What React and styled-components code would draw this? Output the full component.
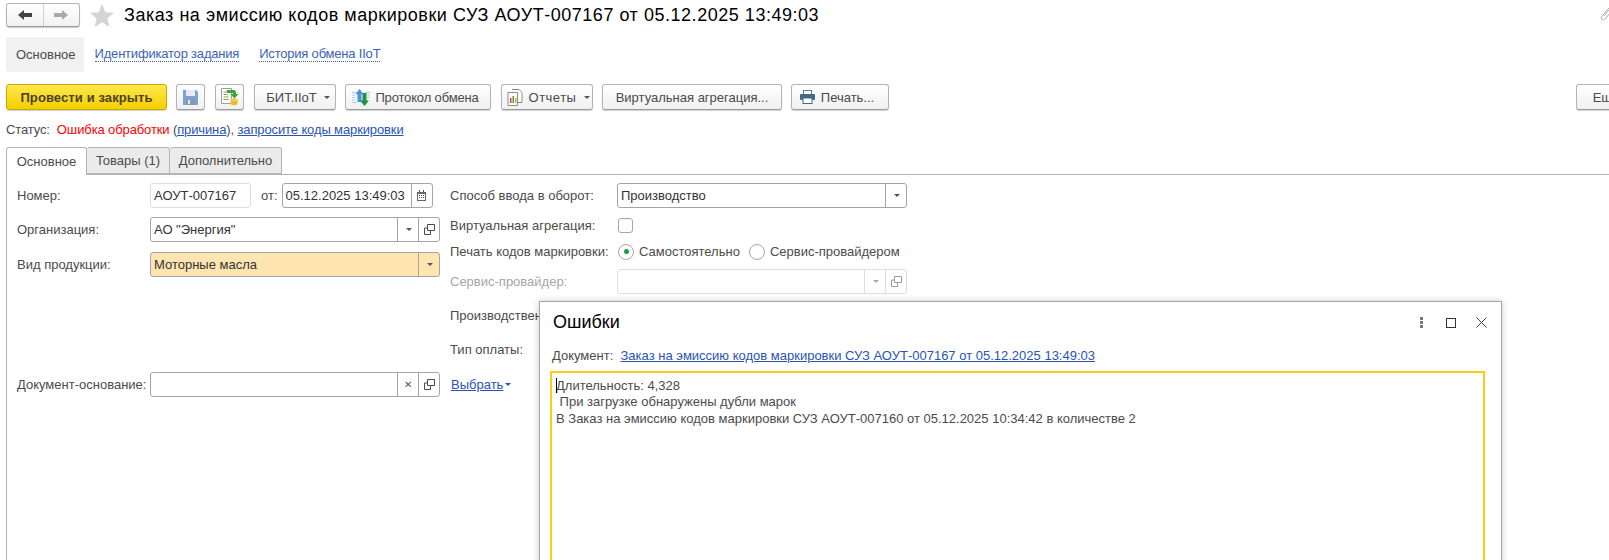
import React from "react";
import styled, { createGlobalStyle } from "styled-components";

const GlobalStyle = createGlobalStyle`
  html, body {
    margin: 0;
    padding: 0;
    background: #fff;
    overflow: hidden;
  }
  body {
    font-family: "Liberation Sans", Arial, sans-serif;
    font-size: 13px;
    color: #4b4b4b;
  }
`;

const Page = styled.div`
  position: relative;
  width: 1609px;
  height: 560px;
  overflow: hidden;
`;

const TitleBar = styled.div`
  display: flex;
  align-items: center;
  height: 30px;
  padding-left: 6px;
`;

const NavGroup = styled.div`
  display: flex;
  width: 74px;
  height: 24px;
  margin-top: -1px;
  box-sizing: border-box;
  border: 1px solid #b4b4b4;
  border-bottom-color: #9b9b9b;
  border-radius: 3px;
  background: linear-gradient(#fff, #f1f1f1);
  box-shadow: 0 1px 1px #ccc;
`;

const NavCell = styled.div`
  flex: 1;
  display: flex;
  align-items: center;
  justify-content: center;
  & + & {
    border-left: 1px solid #d0d0d0;
  }
`;

const StarBox = styled.div`
  display: flex;
  margin-left: 10px;
  margin-right: 10px;
`;

const Title = styled.div`
  flex: 1;
  font-size: 18px;
  letter-spacing: 0.53px;
  color: #000;
  white-space: nowrap;
`;

const SectionBar = styled.div`
  display: flex;
  align-items: center;
  height: 35px;
  margin: 7px 0 0 6px;
`;

const SectionActive = styled.div`
  display: flex;
  align-items: center;
  height: 100%;
  padding: 0 8px 0 10px;
  border-radius: 3px;
  background: #f1f1f1;
  color: #4b4b4b;
`;

const SectionLink = styled.a`
  margin-left: ${(p) => p.$gap}px;
  color: #3d64b4;
  border-bottom: 1px dotted #3d64b4;
  line-height: 14px;
  letter-spacing: -0.2px;
`;

const Toolbar = styled.div`
  display: flex;
  width: 1640px;
  height: 26px;
  gap: 9px;
  margin: 12px 0 0 6px;
`;

const Button = styled.div`
  display: flex;
  flex: none;
  align-items: center;
  justify-content: center;
  gap: ${(p) => p.$gap || 5}px;
  box-sizing: border-box;
  width: ${(p) => p.$width}px;
  height: 26px;
  margin-left: ${(p) => p.$left || 0}px;
  padding: 0 ${(p) => p.$padRight || 0}px 0 ${(p) => p.$padLeft || 0}px;
  border: 1px solid #b4b4b4;
  border-bottom-color: #9b9b9b;
  border-radius: 3px;
  background: linear-gradient(#fff, #f0f0f0);
  box-shadow: 0 1px 1px #d0d0d0;
  color: #4b4b4b;
  letter-spacing: ${(p) => p.$track || 0}px;
  white-space: nowrap;
`;

const PrimaryButton = styled(Button)`
  border-color: #c7a700;
  background: linear-gradient(#ffe84d, #f4cf00);
  color: #4a4222;
  font-weight: bold;
  letter-spacing: 0.1px;
`;

const Caret = styled.span`
  width: 0;
  height: 0;
  margin-left: 2px;
  border-left: 3px solid transparent;
  border-right: 3px solid transparent;
  border-top: 3px solid ${(p) => p.$color || "#555"};
`;

const StatusRow = styled.div`
  display: flex;
  align-items: center;
  height: 20px;
  margin: 9px 0 0 6px;
  letter-spacing: -0.12px;
  white-space: pre;
`;

const ErrorText = styled.span`
  color: #ff0000;
`;

const BlueLink = styled.a`
  color: #2a54b0;
  text-decoration: underline;
`;

const TabStrip = styled.div`
  display: flex;
  height: 28px;
  margin: 8px 0 0 6px;
  box-sizing: border-box;
  border-bottom: 1px solid #b4b4b4;
`;

const Tab = styled.div`
  display: flex;
  align-items: center;
  justify-content: center;
  box-sizing: border-box;
  width: ${(p) => p.$width}px;
  height: ${(p) => (p.$active ? 28 : 27)}px;
  border: 1px solid #b4b4b4;
  border-bottom: ${(p) => (p.$active ? "0" : "1px solid #b4b4b4")};
  border-left-width: ${(p) => (p.$first ? 1 : 0)}px;
  border-radius: 3px 3px 0 0;
  background: ${(p) => (p.$active ? "#fff" : "#ebebeb")};
`;

const FormBody = styled.div`
  display: flex;
  height: 400px;
  margin-left: 6px;
  padding: 8px 0 0 10px;
  border-left: 1px solid #b4b4b4;
`;

const LeftColumn = styled.div`
  display: flex;
  flex: none;
  flex-direction: column;
  width: 433px;
`;

const RightColumn = styled.div`
  display: flex;
  flex-direction: column;
`;

const Row = styled.div`
  display: flex;
  align-items: center;
  height: ${(p) => p.$height}px;
  margin-top: ${(p) => p.$top || 0}px;
`;

const Label = styled.div`
  flex: none;
  width: ${(p) => p.$width}px;
  color: ${(p) => (p.$muted ? "#a6a6a6" : "#4b4b4b")};
  white-space: nowrap;
`;

const Field = styled.div`
  display: flex;
  flex: none;
  align-items: stretch;
  box-sizing: border-box;
  width: ${(p) => p.$width}px;
  height: 25px;
  border: 1px solid ${(p) => (p.$soft ? "#dedede" : "#a5a5a5")};
  border-radius: 3px;
  background: ${(p) => p.$bg || "#fff"};
  color: #333;
`;

const FieldValue = styled.div`
  flex: 1;
  display: flex;
  align-items: center;
  padding-left: 3px;
  white-space: nowrap;
`;

const FieldButton = styled.div`
  flex: none;
  display: flex;
  align-items: center;
  justify-content: center;
  width: 20px;
  border-left: 1px solid ${(p) => (p.$soft ? "#dedede" : "#a5a5a5")};
  color: #555;
  font-size: 10px;
`;

const Checkbox = styled.div`
  box-sizing: border-box;
  width: 15px;
  height: 15px;
  border: 1px solid #a5a5a5;
  border-radius: 3px;
`;

const Radio = styled.div`
  display: flex;
  flex: none;
  align-items: center;
  justify-content: center;
  box-sizing: border-box;
  width: 16px;
  height: 16px;
  margin-right: 5px;
  border: 1px solid #a5a5a5;
  border-radius: 50%;
  &::after {
    content: "";
    display: ${(p) => (p.$on ? "block" : "none")};
    width: 5px;
    height: 5px;
    border-radius: 50%;
    background: #1a9c4a;
  }
`;

const RadioLabel = styled.span`
  margin-right: ${(p) => p.$gap || 0}px;
  white-space: nowrap;
`;

const SmallText = styled.span`
  margin: 0 4px 0 10px;
`;

const PickLink = styled(BlueLink)`
  margin-left: 11px;
`;

const ClipBox = styled.div`
  position: absolute;
  top: 6px;
  left: 1599px;
`;

const Modal = styled.div`
  position: absolute;
  left: 539px;
  top: 301px;
  width: 963px;
  height: 300px;
  box-sizing: border-box;
  padding: 0 16px 0 10px;
  border: 1px solid #a5a5a5;
  background: #fff;
  box-shadow: 0 0 7px rgba(0, 0, 0, 0.22);
`;

const ModalHead = styled.div`
  display: flex;
  align-items: center;
  height: 41px;
  padding-left: 3px;
`;

const ModalTitle = styled.div`
  flex: 1;
  font-size: 18px;
  color: #000;
`;

const WindowIcons = styled.div`
  display: flex;
  align-items: center;
  gap: 20px;
  margin-right: -2px;
`;

const DotsWrap = styled.div`
  display: flex;
  margin-right: 3px;
`;

const DocRow = styled.div`
  display: flex;
  align-items: center;
  height: 18px;
  margin-top: 3px;
  padding-left: 2px;
  white-space: pre;
`;

const ErrorBox = styled.div`
  position: relative;
  box-sizing: border-box;
  height: 260px;
  margin-top: 7px;
  padding: 5px 4px;
  border: 2px solid #fdcb17;
  color: #4b4b4b;
  line-height: 16.4px;
  white-space: pre;
`;

const TextCursor = styled.span`
  position: absolute;
  left: 4px;
  top: 5px;
  width: 1px;
  height: 15px;
  background: #000;
`;

const ArrowIcon = ({ dir, color }) => (
  <svg width="14" height="10" viewBox="0 0 14 10">
    <path
      d={dir === "left" ? "M0 5 6 0v3h8v4H6v3z" : "M14 5 8 0v3H0v4h8v3z"}
      fill={color}
    />
  </svg>
);

const StarIcon = () => (
  <svg width="24" height="23" viewBox="0 0 24 23">
    <path d="M12 0l3.4 8.2 8.6.6-6.6 5.6 2.1 8.6L12 18.3 4.500 23l2.100-8.600L0 8.800l8.600-.6z" fill="#d4d4d4" />
  </svg>
);

const SaveIcon = () => (
  <svg width="15" height="16" viewBox="0 0 15 16">
    <path d="M0 1h13l2 2v13H0z" fill="#7ba4d2" />
    <rect x="3" y="1" width="9" height="6" fill="#e4edf6" />
    <rect x="3" y="10" width="9" height="6" fill="#8c9aa8" />
    <rect x="5" y="11" width="2" height="4" fill="#dfe6ec" />
  </svg>
);

const PostIcon = () => (
  <svg width="18" height="18" viewBox="0 0 18 18">
    <path d="M.5.500h10v15H.5z" fill="#fff" stroke="#98a78a" />
    <path d="M2.500 4h5M2.500 6.500h4M2.500 9h5M2.500 11.500h5" stroke="#7ea24c" />
    <path d="M6 2h6.500c1.500 0 2.500 1 2.500 2.500V6h2.500L13.500 10.500 9.500 6H12V5H6z" fill="#3aa63a" />
    <path d="M9.500 11.500c0-1.500 7-1.500 7 0v4.500c0 1.500-7 1.500-7 0z" fill="#eeb92a" />
    <path d="M9.500 11.500c0 1.200 7 1.200 7 0" fill="none" stroke="#fbe28a" />
  </svg>
);

const ExchangeIcon = () => (
  <svg width="18" height="17" viewBox="0 0 18 17">
    <path d="M0 3.500h4M0 6h3M0 8.500h3M0 11h3M0 13.500h5M13 3.500h5M15 6h3M15 8.500h3" stroke="#a9cbee" />
    <path d="M7.500 0l4 5H9.500v8h-4V5h-2z" fill="#4a90dc" />
    <path d="M12.500 17l-4.500-5.500h2.500V4h4v7.500H17z" fill="#1d9440" />
  </svg>
);

const ReportIcon = () => (
  <svg width="16" height="17" viewBox="0 0 16 17">
    <path d="M5 .500h7l3 3v10h-4" fill="#fff" stroke="#8c8c8c" />
    <path d="M1 3.500h9.500v13H1z" fill="#fff" stroke="#8c8c8c" />
    <rect x="3" y="9" width="1.500" height="5" fill="#d9453d" />
    <rect x="5.500" y="7" width="1.500" height="7" fill="#3da34d" />
    <rect x="8" y="9" width="1.500" height="5" fill="#e2a62b" />
  </svg>
);

const PrintIcon = () => (
  <svg width="15" height="14" viewBox="0 0 15 14">
    <rect x="3.500" y="0.500" width="8" height="4" fill="#fff" stroke="#5d7f9f" />
    <rect x="0" y="4" width="15" height="6" rx="1" fill="#44688c" />
    <rect x="3" y="8" width="9" height="5.500" fill="#fff" stroke="#44688c" />
  </svg>
);

const OpenIcon = ({ color = "#4b4b4b" }) => (
  <svg width="11" height="11" viewBox="0 0 11 11">
    <path d="M3.500.500h7v6h-7zM3.500 4H.500v6.500h6V7" fill="none" stroke={color} />
  </svg>
);

const CalendarIcon = () => (
  <svg width="11" height="11" viewBox="0 0 11 11">
    <path d="M1 2h9v9H1z" fill="#666" />
    <path d="M2 4h7v6H2z" fill="#fff" />
    <path d="M3 5h1v1H3zM5 5h1v1H5zM7 5h1v1H7zM3 7h1v1H3zM5 7h1v1H5zM7 7h1v1H7z" fill="#555" />
    <path d="M3 0h1v2H3zM7 0h1v2H7z" fill="#555" />
  </svg>
);

const ClipIcon = () => (
  <svg width="14" height="17" viewBox="0 0 14 17">
    <path
      d="M10 2 3 10c-2 2.500 1 5 3 3l6-7c1-1.500-1-3-2.500-1.500L5 10"
      fill="none"
      stroke="#aaa"
    />
  </svg>
);

const DotsIcon = () => (
  <svg width="3" height="11" viewBox="0 0 3 11">
    <path d="M0 0h3v3H0zM0 4h3v3H0zM0 8h3v3H0z" fill="#777" />
  </svg>
);

const MaximizeIcon = () => (
  <svg width="10" height="10" viewBox="0 0 10 10">
    <rect x="0.500" y="0.500" width="9" height="9" fill="none" stroke="#333" />
  </svg>
);

const CloseIcon = () => (
  <svg width="11" height="11" viewBox="0 0 11 11">
    <path d="M.500.500l10 10M10.500.500l-10 10" stroke="#444" />
  </svg>
);

const App = () => (
  <Page>
    <GlobalStyle />
    <TitleBar>
      <NavGroup>
        <NavCell><ArrowIcon dir="left" color="#444" /></NavCell>
        <NavCell><ArrowIcon dir="right" color="#aaa" /></NavCell>
      </NavGroup>
      <StarBox><StarIcon /></StarBox>
      <Title>Заказ на эмиссию кодов маркировки СУЗ АОУТ-007167 от 05.12.2025 13:49:03</Title>
    </TitleBar>
    <ClipBox><ClipIcon /></ClipBox>

    <SectionBar>
      <SectionActive>Основное</SectionActive>
      <SectionLink $gap={11}>Идентификатор задания</SectionLink>
      <SectionLink $gap={20}>История обмена IIoT</SectionLink>
    </SectionBar>

    <Toolbar>
      <PrimaryButton $width={161}>Провести и закрыть</PrimaryButton>
      <Button $width={29}><SaveIcon /></Button>
      <Button $width={29} $left={1}><PostIcon /></Button>
      <Button $width={82} $left={1} $padLeft={6}>БИТ.IIoT <Caret /></Button>
      <Button $width={146} $track={-0.15} $padRight={5}><ExchangeIcon />Протокол обмена</Button>
      <Button $width={92} $left={1} $track={0.5} $padLeft={3} $gap={6}><ReportIcon />Отчеты <Caret /></Button>
      <Button $width={180}>Виртуальная агрегация...</Button>
      <Button $width={98} $gap={6} $padRight={6}><PrintIcon />Печать...</Button>
      <Button $width={60} $left={678}>Ещё</Button>
    </Toolbar>

    <StatusRow>
      Статус:  <ErrorText>Ошибка обработки</ErrorText> (<BlueLink>причина</BlueLink>), <BlueLink>запросите коды маркировки</BlueLink>
    </StatusRow>

    <TabStrip>
      <Tab $active $first $width={81}>Основное</Tab>
      <Tab $width={83}>Товары (1)</Tab>
      <Tab $width={112}>Дополнительно</Tab>
    </TabStrip>

    <FormBody>
      <LeftColumn>
        <Row $height={25}>
          <Label $width={133}>Номер:</Label>
          <Field $width={101} $soft><FieldValue>АОУТ-007167</FieldValue></Field>
          <SmallText>от:</SmallText>
          <Field $width={151}>
            <FieldValue>05.12.2025 13:49:03</FieldValue>
            <FieldButton><CalendarIcon /></FieldButton>
          </Field>
        </Row>
        <Row $height={25} $top={9}>
          <Label $width={133}>Организация:</Label>
          <Field $width={290}>
            <FieldValue>АО "Энергия"</FieldValue>
            <FieldButton><Caret /></FieldButton>
            <FieldButton><OpenIcon /></FieldButton>
          </Field>
        </Row>
        <Row $height={25} $top={10}>
          <Label $width={133}>Вид продукции:</Label>
          <Field $width={290} $bg="#ffe5b0">
            <FieldValue>Моторные масла</FieldValue>
            <FieldButton><Caret /></FieldButton>
          </Field>
        </Row>
        <Row $height={25} $top={95}>
          <Label $width={133}>Документ-основание:</Label>
          <Field $width={290}>
            <FieldValue />
            <FieldButton>✕</FieldButton>
            <FieldButton><OpenIcon /></FieldButton>
          </Field>
          <PickLink>Выбрать</PickLink>
          <Caret $color="#2a54b0" />
        </Row>
      </LeftColumn>
      <RightColumn>
        <Row $height={25}>
          <Label $width={167}>Способ ввода в оборот:</Label>
          <Field $width={290}>
            <FieldValue>Производство</FieldValue>
            <FieldButton><Caret /></FieldButton>
          </Field>
        </Row>
        <Row $height={25} $top={5}>
          <Label $width={168}>Виртуальная агрегация:</Label>
          <Checkbox />
        </Row>
        <Row $height={25} $top={1}>
          <Label $width={168}>Печать кодов маркировки:</Label>
          <Radio $on />
          <RadioLabel $gap={9}>Самостоятельно</RadioLabel>
          <Radio />
          <RadioLabel>Сервис-провайдером</RadioLabel>
        </Row>
        <Row $height={25} $top={5}>
          <Label $width={167} $muted>Сервис-провайдер:</Label>
          <Field $width={290} $soft>
            <FieldValue />
            <FieldButton $soft><Caret $color="#aaa" /></FieldButton>
            <FieldButton $soft><OpenIcon color="#999" /></FieldButton>
          </Field>
        </Row>
        <Row $height={25} $top={9}>
          <Label $width={167}>Производственный объект:</Label>
        </Row>
        <Row $height={25} $top={9}>
          <Label $width={167}>Тип оплаты:</Label>
        </Row>
      </RightColumn>
    </FormBody>

    <Modal>
      <ModalHead>
        <ModalTitle>Ошибки</ModalTitle>
        <WindowIcons>
          <DotsWrap><DotsIcon /></DotsWrap>
          <MaximizeIcon />
          <CloseIcon />
        </WindowIcons>
      </ModalHead>
      <DocRow>
        Документ:  <BlueLink>Заказ на эмиссию кодов маркировки СУЗ АОУТ-007167 от 05.12.2025 13:49:03</BlueLink>
      </DocRow>
      <ErrorBox>
        <TextCursor />
        {"Длительность: 4,328\n При загрузке обнаружены дубли марок\nВ Заказ на эмиссию кодов маркировки СУЗ АОУТ-007160 от 05.12.2025 10:34:42 в количестве 2"}
      </ErrorBox>
    </Modal>
  </Page>
);

export default App;
